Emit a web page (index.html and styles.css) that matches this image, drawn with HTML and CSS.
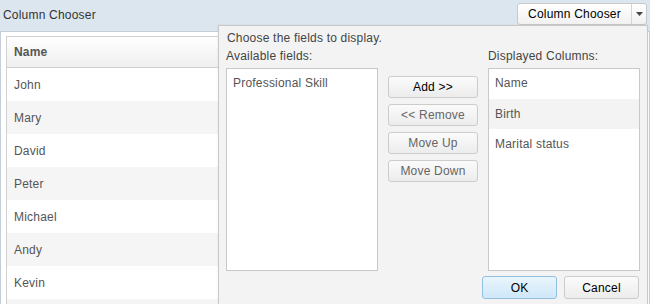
FILE: index.html
```html
<!DOCTYPE html>
<html>
<head>
<meta charset="utf-8">
<link rel="stylesheet" href="styles.css">
</head>
<body>
<div class="app">
  <div class="toolbar">
    <span class="title">Column Chooser</span>
    <div class="split-btn">
      <span class="split-main">Column Chooser</span>
      <span class="split-arrow"><svg width="7" height="4" viewBox="0 0 7 4"><path d="M0 0H7L3.5 4Z" fill="#444"/></svg></span>
    </div>
  </div>
  <div class="panel">
    <div class="grid">
      <div class="grid-head">Name</div>
      <div class="row">John</div>
      <div class="row alt">Mary</div>
      <div class="row">David</div>
      <div class="row alt">Peter</div>
      <div class="row">Michael</div>
      <div class="row alt">Andy</div>
      <div class="row">Kevin</div>
      <div class="row alt"></div>
    </div>
  </div>

  <div class="chooser">
    <div class="intro">Choose the fields to display.</div>
    <div class="cols">
      <div class="col">
        <div class="label">Available fields:</div>
        <div class="listbox">
          <div class="item first">Professional Skill</div>
        </div>
      </div>
      <div class="actions">
        <button class="btn enabled">Add &gt;&gt;</button>
        <button class="btn">&lt;&lt; Remove</button>
        <button class="btn">Move Up</button>
        <button class="btn">Move Down</button>
      </div>
      <div class="col right">
        <div class="label">Displayed Columns:</div>
        <div class="listbox">
          <div class="item first">Name</div>
          <div class="item alt">Birth</div>
          <div class="item">Marital status</div>
        </div>
      </div>
    </div>
    <div class="footer">
      <button class="btn ok">OK</button>
      <button class="btn enabled cancel">Cancel</button>
    </div>
  </div>
</div>
</body>
</html>
```

FILE: styles.css
```css
* { box-sizing: border-box; }
html, body { margin: 0; padding: 0; }
body {
  width: 650px;
  height: 304px;
  overflow: hidden;
  font-family: Arial, "Liberation Sans", sans-serif;
  font-size: 12px;
  letter-spacing: 0.2px;
  color: #333;
  background: #dce6ef;
}
.app {
  position: relative;
  width: 650px;
  height: 304px;
}
.toolbar {
  height: 31px;
  display: flex;
  align-items: flex-start;
  justify-content: space-between;
  padding: 3px 3px 0 3px;
  background: #dce6ef;
}
.title {
  line-height: 24px;
  color: #333;
}
.split-btn {
  display: flex;
  height: 22px;
  border: 1px solid #c9c9c9;
  border-radius: 3px;
  background: linear-gradient(#ffffff, #f1f1f1);
}
.split-main {
  width: 114px;
  line-height: 20px;
  text-align: center;
  color: #000;
  border-right: 1px solid #d4d4d4;
}
.split-arrow {
  width: 14px;
  display: flex;
  align-items: center;
  justify-content: center;
}
.panel {
  height: 273px;
  border: 1px solid #c5cfd9;
  border-bottom: none;
  background: #fff;
  padding: 4px 4px 0 5px;
}
.grid {
  border: 1px solid #d0d0d0;
  border-bottom: none;
  height: 100%;
  overflow: hidden;
}
.grid-head {
  height: 31px;
  line-height: 30px;
  padding-left: 7px;
  font-weight: bold;
  color: #555;
  background: linear-gradient(#ffffff, #efefef);
  border-bottom: 1px solid #d0d0d0;
}
.row {
  height: 33px;
  line-height: 34px;
  padding-left: 7px;
  color: #555;
  background: #fff;
}
.row.alt { background: #f5f5f5; }

.chooser {
  position: absolute;
  left: 218px;
  top: 25px;
  width: 430px;
  height: 280px;
  background: #f3f3f3;
  border: 1px solid #c8c8c8;
  padding: 5px 7px 0 7px;
  box-shadow: 0 0 2px rgba(0,0,0,0.08);
  color: #444;
}
.intro {
  line-height: 15px;
  padding-left: 1px;
}
.cols {
  display: flex;
  gap: 10px;
  margin-top: 3px;
}
.col {
  width: 153px;
  display: flex;
  flex-direction: column;
}
.label {
  line-height: 15px;
  height: 19px;
}
.listbox {
  height: 203px;
  background: #fff;
  border: 1px solid #c8c8c8;
}
.item {
  height: 30px;
  line-height: 30px;
  padding-left: 6px;
  color: #555;
}
.item.first { line-height: 28px; }
.item.alt { background: #f3f3f3; }
.actions {
  display: flex;
  flex-direction: column;
  gap: 6px;
  padding-top: 27px;
  width: 90px;
}
.btn {
  font-family: Arial, "Liberation Sans", sans-serif;
  font-size: 12px;
  letter-spacing: 0.2px;
  height: 22px;
  width: 90px;
  padding: 0;
  border: 1px solid #cccccc;
  border-radius: 3px;
  background: linear-gradient(#fbfbfb, #ececec);
  color: #666;
  line-height: 20px;
}
.btn.enabled { color: #000; }
.footer {
  display: flex;
  justify-content: flex-end;
  gap: 7px;
  margin-top: 5px;
  padding-right: 1px;
}
.footer .btn {
  width: 75px;
  height: 23px;
  color: #000;
}
.btn.ok {
  background: linear-gradient(#e9f5fd, #cfe7f8);
  border-color: #94bfdd;
}
```
